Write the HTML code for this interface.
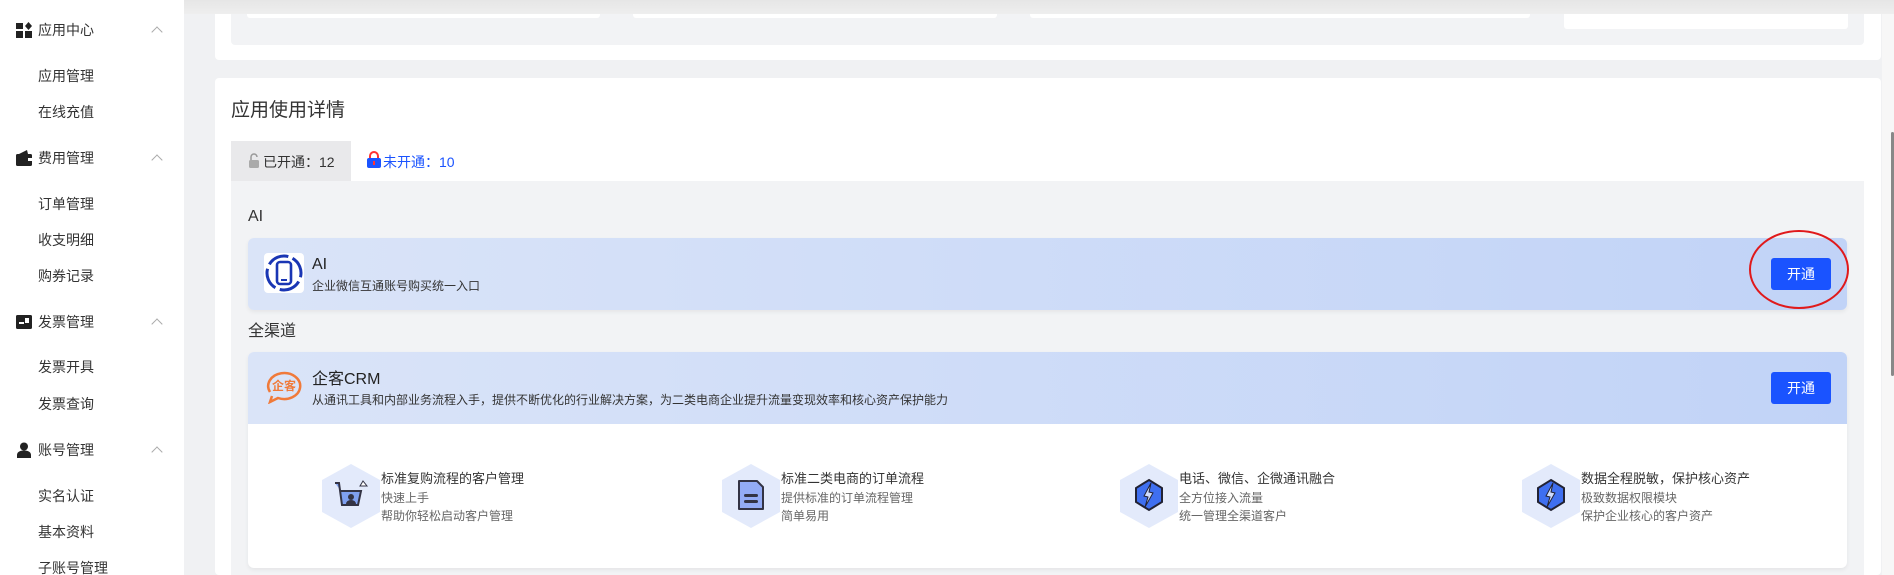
<!DOCTYPE html>
<html><head><meta charset="utf-8"><style>
*{margin:0;padding:0;box-sizing:border-box}
html,body{width:1894px;height:575px;overflow:hidden}
body{background:#f0f1f3;font-family:"Liberation Sans","Noto Sans CJK SC",sans-serif;color:#333;position:relative}
.abs{position:absolute}
.side{left:0;top:0;width:184px;height:575px;background:#fff}
.si{position:absolute;left:38px;font-size:14px;line-height:20px;color:#333;white-space:nowrap}
.ic{position:absolute;left:16px;width:16px;height:16px}
.chev{position:absolute;left:153px;width:8px;height:8px;border-left:1px solid #aaa;border-top:1px solid #aaa;transform:rotate(45deg)}
.card{background:#fff;border-radius:4px}
.btn{position:absolute;left:1771px;width:60px;height:32px;background:#1a53ff;color:#fff;font-size:14px;line-height:32px;text-align:center;border-radius:3px}
.grad{background:linear-gradient(90deg,#dae4f8,#c1d3f7)}
.ft{position:absolute;font-size:13px;color:#333;line-height:18px;white-space:nowrap}
.fs{position:absolute;font-size:12px;color:#666;line-height:18px;white-space:nowrap}
.hex{position:absolute;width:58px;height:64px;background:#e3eafb;clip-path:polygon(50% 0,100% 25%,100% 75%,50% 100%,0 75%,0 25%)}
</style></head><body>
<div class="abs side"></div>
<svg class="ic" style="top:22px" viewBox="0 0 16 16"><rect x="0" y="1" width="7" height="6" fill="#222"/><rect x="0" y="9" width="7" height="7" fill="#222"/><rect x="9" y="9" width="7" height="7" fill="#222"/><path d="M12.5 0L16 4 12.5 8 9 4Z" fill="#222"/></svg>
<div class="si" style="top:20px">应用中心</div><div class="chev" style="top:28px"></div>
<div class="si" style="top:66px">应用管理</div>
<div class="si" style="top:102px">在线充值</div>
<svg class="ic" style="top:150px" viewBox="0 0 16 16"><rect x="0" y="4" width="16" height="12" rx="1.5" fill="#222"/><path d="M3 4L11 0 12 4Z" fill="#222"/><rect x="12" y="8" width="4" height="3" fill="#fff"/></svg>
<div class="si" style="top:148px">费用管理</div><div class="chev" style="top:156px"></div>
<div class="si" style="top:194px">订单管理</div>
<div class="si" style="top:230px">收支明细</div>
<div class="si" style="top:266px">购券记录</div>
<svg class="ic" style="top:314px" viewBox="0 0 16 16"><rect x="0" y="1" width="16" height="14" rx="1.5" fill="#222"/><rect x="3" y="8" width="5" height="2" fill="#fff"/><rect x="9" y="4" width="4" height="5" fill="#fff"/></svg>
<div class="si" style="top:312px">发票管理</div><div class="chev" style="top:320px"></div>
<div class="si" style="top:357px">发票开具</div>
<div class="si" style="top:394px">发票查询</div>
<svg class="ic" style="top:442px" viewBox="0 0 16 16"><circle cx="8" cy="4.5" r="4" fill="#222"/><path d="M1 16v-3c0-3 3-4.5 7-4.5s7 1.5 7 4.5v3Z" fill="#222"/></svg>
<div class="si" style="top:440px">账号管理</div><div class="chev" style="top:448px"></div>
<div class="si" style="top:486px">实名认证</div>
<div class="si" style="top:522px">基本资料</div>
<div class="si" style="top:558px">子账号管理</div>
<div class="abs card" style="left:215px;top:0;width:1666px;height:60px"></div>
<div class="abs" style="left:231px;top:0;width:1633px;height:45px;background:#f2f3f5;border-radius:4px"></div>
<div class="abs" style="left:247px;top:0;width:353px;height:18px;background:#fff;border-radius:3px"></div>
<div class="abs" style="left:633px;top:0;width:364px;height:18px;background:#fff;border-radius:3px"></div>
<div class="abs" style="left:1030px;top:0;width:500px;height:18px;background:#fff;border-radius:3px"></div>
<div class="abs" style="left:1564px;top:0;width:284px;height:29px;background:#fff;border-radius:3px"></div>
<div class="abs card" style="left:215px;top:78px;width:1666px;height:497px"></div>
<div class="abs" style="left:231px;top:99px;font-size:19px;line-height:24px;color:#333">应用使用详情</div>
<div class="abs" style="left:231px;top:141px;width:120px;height:40px;background:#e9e9eb"></div>
<svg class="abs" style="left:248px;top:152px" width="12" height="16" viewBox="0 0 12 16"><path d="M3 8V5a3 3 0 0 1 6 0" stroke="#999" stroke-width="1.5" fill="none"/><rect x="1" y="8" width="10" height="8" rx="1.5" fill="#aaa"/></svg>
<div class="abs" style="left:263px;top:152px;font-size:14px;line-height:20px;color:#333">已开通：12</div>
<svg class="abs" style="left:366px;top:151px" width="16" height="17" viewBox="0 0 16 17"><path d="M4 8V5a4 4 0 0 1 8 0v3" stroke="#f33" stroke-width="2" fill="none"/><rect x="1" y="7" width="14" height="10" rx="2" fill="#1a53ff"/><rect x="7" y="10" width="2" height="4" fill="#f33"/></svg>
<div class="abs" style="left:383px;top:152px;font-size:14px;line-height:20px;color:#1a53ff">未开通：10</div>
<div class="abs" style="left:231px;top:181px;width:1633px;height:394px;background:#f2f3f5"></div>
<div class="abs" style="left:248px;top:207px;font-size:16px;line-height:20px;color:#333">AI</div>
<div class="abs grad" style="left:248px;top:238px;width:1599px;height:72px;border-radius:6px;box-shadow:0 2px 4px rgba(0,0,0,.06)"></div>
<div class="abs" style="left:264px;top:253px;width:40px;height:40px;background:#fff;border-radius:4px"></div>
<svg class="abs" style="left:264px;top:253px" width="40" height="40" viewBox="0 0 40 40"><circle cx="20" cy="20" r="17" stroke="#1a36b4" stroke-width="3" fill="none" stroke-dasharray="22 4.7" transform="rotate(-60 20 20)"/><rect x="13" y="9" width="14" height="22" rx="3" stroke="#1a36b4" stroke-width="2.6" fill="none"/><rect x="17" y="26" width="6" height="2" fill="#1a36b4"/></svg>
<div class="abs" style="left:312px;top:255px;font-size:16px;line-height:20px;color:#222">AI</div>
<div class="abs" style="left:312px;top:278px;font-size:12px;line-height:16px;color:#333">企业微信互通账号购买统一入口</div>
<div class="btn" style="top:258px">开通</div>
<div class="abs" style="left:1749px;top:230px;width:100px;height:79px;border:2px solid #e0191b;border-radius:50%"></div>
<div class="abs" style="left:248px;top:322px;font-size:16px;line-height:20px;color:#333">全渠道</div>
<div class="abs" style="left:248px;top:352px;width:1599px;height:216px;background:#fff;border-radius:6px;overflow:hidden;box-shadow:0 2px 4px rgba(0,0,0,.06)"><div class="grad" style="height:72px"></div></div>
<svg class="abs" style="left:264px;top:368px" width="40" height="36" viewBox="0 0 40 36"><path d="M6 24A16 13 0 1 1 14 30L6 34 8 28" stroke="#f07a3a" stroke-width="2.5" fill="none"/><text x="20" y="22" font-size="12" font-weight="bold" fill="#f07a3a" text-anchor="middle" font-family="Noto Sans CJK SC,sans-serif">企客</text></svg>
<div class="abs" style="left:312px;top:370px;font-size:16px;line-height:20px;color:#222">企客CRM</div>
<div class="abs" style="left:312px;top:392px;font-size:12px;line-height:16px;color:#333">从通讯工具和内部业务流程入手，提供不断优化的行业解决方案，为二类电商企业提升流量变现效率和核心资产保护能力</div>
<div class="btn" style="top:372px">开通</div>
<div class="hex" style="left:322px;top:464px"></div>
<svg class="abs" style="left:334px;top:480px" width="36" height="32" viewBox="0 0 36 32"><path d="M1 3h4l3 22h16l3-14H7" stroke="#334" stroke-width="2" fill="#7fa0f0"/><circle cx="17" cy="17" r="3" fill="#334"/><path d="M12 24a5 4 0 0 1 10 0Z" fill="#334"/><path d="M26 6l3-5 4 5Z" stroke="#334" fill="#fff"/></svg>
<div class="ft" style="left:381px;top:470px">标准复购流程的客户管理</div>
<div class="fs" style="left:381px;top:489px">快速上手</div>
<div class="fs" style="left:381px;top:507px">帮助你轻松启动客户管理</div>
<div class="hex" style="left:722px;top:464px"></div>
<svg class="abs" style="left:736px;top:478px" width="30" height="34" viewBox="0 0 30 34"><path d="M3 3h18l6 6v22H3Z" stroke="#334" stroke-width="2" fill="#93abf5" stroke-linejoin="round"/><rect x="8" y="16" width="14" height="3" rx="1.5" fill="#334"/><rect x="8" y="22" width="14" height="3" rx="1.5" fill="#334"/></svg>
<div class="ft" style="left:781px;top:470px">标准二类电商的订单流程</div>
<div class="fs" style="left:781px;top:489px">提供标准的订单流程管理</div>
<div class="fs" style="left:781px;top:507px">简单易用</div>
<div class="hex" style="left:1120px;top:464px"></div>
<svg class="abs" style="left:1134px;top:478px" width="30" height="34" viewBox="0 0 30 34"><path d="M15 2L28 10V24L15 32 2 24V10Z" stroke="#223" stroke-width="2" fill="#3f6ff0"/><path d="M17 5L10 18l4 1-3 10 8-14-4-1Z" fill="#cfdcff" stroke="#223"/></svg>
<div class="ft" style="left:1179px;top:470px">电话、微信、企微通讯融合</div>
<div class="fs" style="left:1179px;top:489px">全方位接入流量</div>
<div class="fs" style="left:1179px;top:507px">统一管理全渠道客户</div>
<div class="hex" style="left:1522px;top:464px"></div>
<svg class="abs" style="left:1536px;top:478px" width="30" height="34" viewBox="0 0 30 34"><path d="M15 2L28 10V24L15 32 2 24V10Z" stroke="#223" stroke-width="2" fill="#3f6ff0"/><path d="M17 5L10 18l4 1-3 10 8-14-4-1Z" fill="#cfdcff" stroke="#223"/></svg>
<div class="ft" style="left:1581px;top:470px">数据全程脱敏，保护核心资产</div>
<div class="fs" style="left:1581px;top:489px">极致数据权限模块</div>
<div class="fs" style="left:1581px;top:507px">保护企业核心的客户资产</div>
<div class="abs" style="left:1882px;top:0;width:12px;height:575px;background:#f7f7f7"></div>
<div class="abs" style="left:1891px;top:132px;width:3px;height:244px;background:#888;border-radius:2px"></div>
<div class="abs" style="left:184px;top:0;width:1710px;height:14px;background:linear-gradient(#e6e6e6,#eeeeee)"></div>
</body></html>
